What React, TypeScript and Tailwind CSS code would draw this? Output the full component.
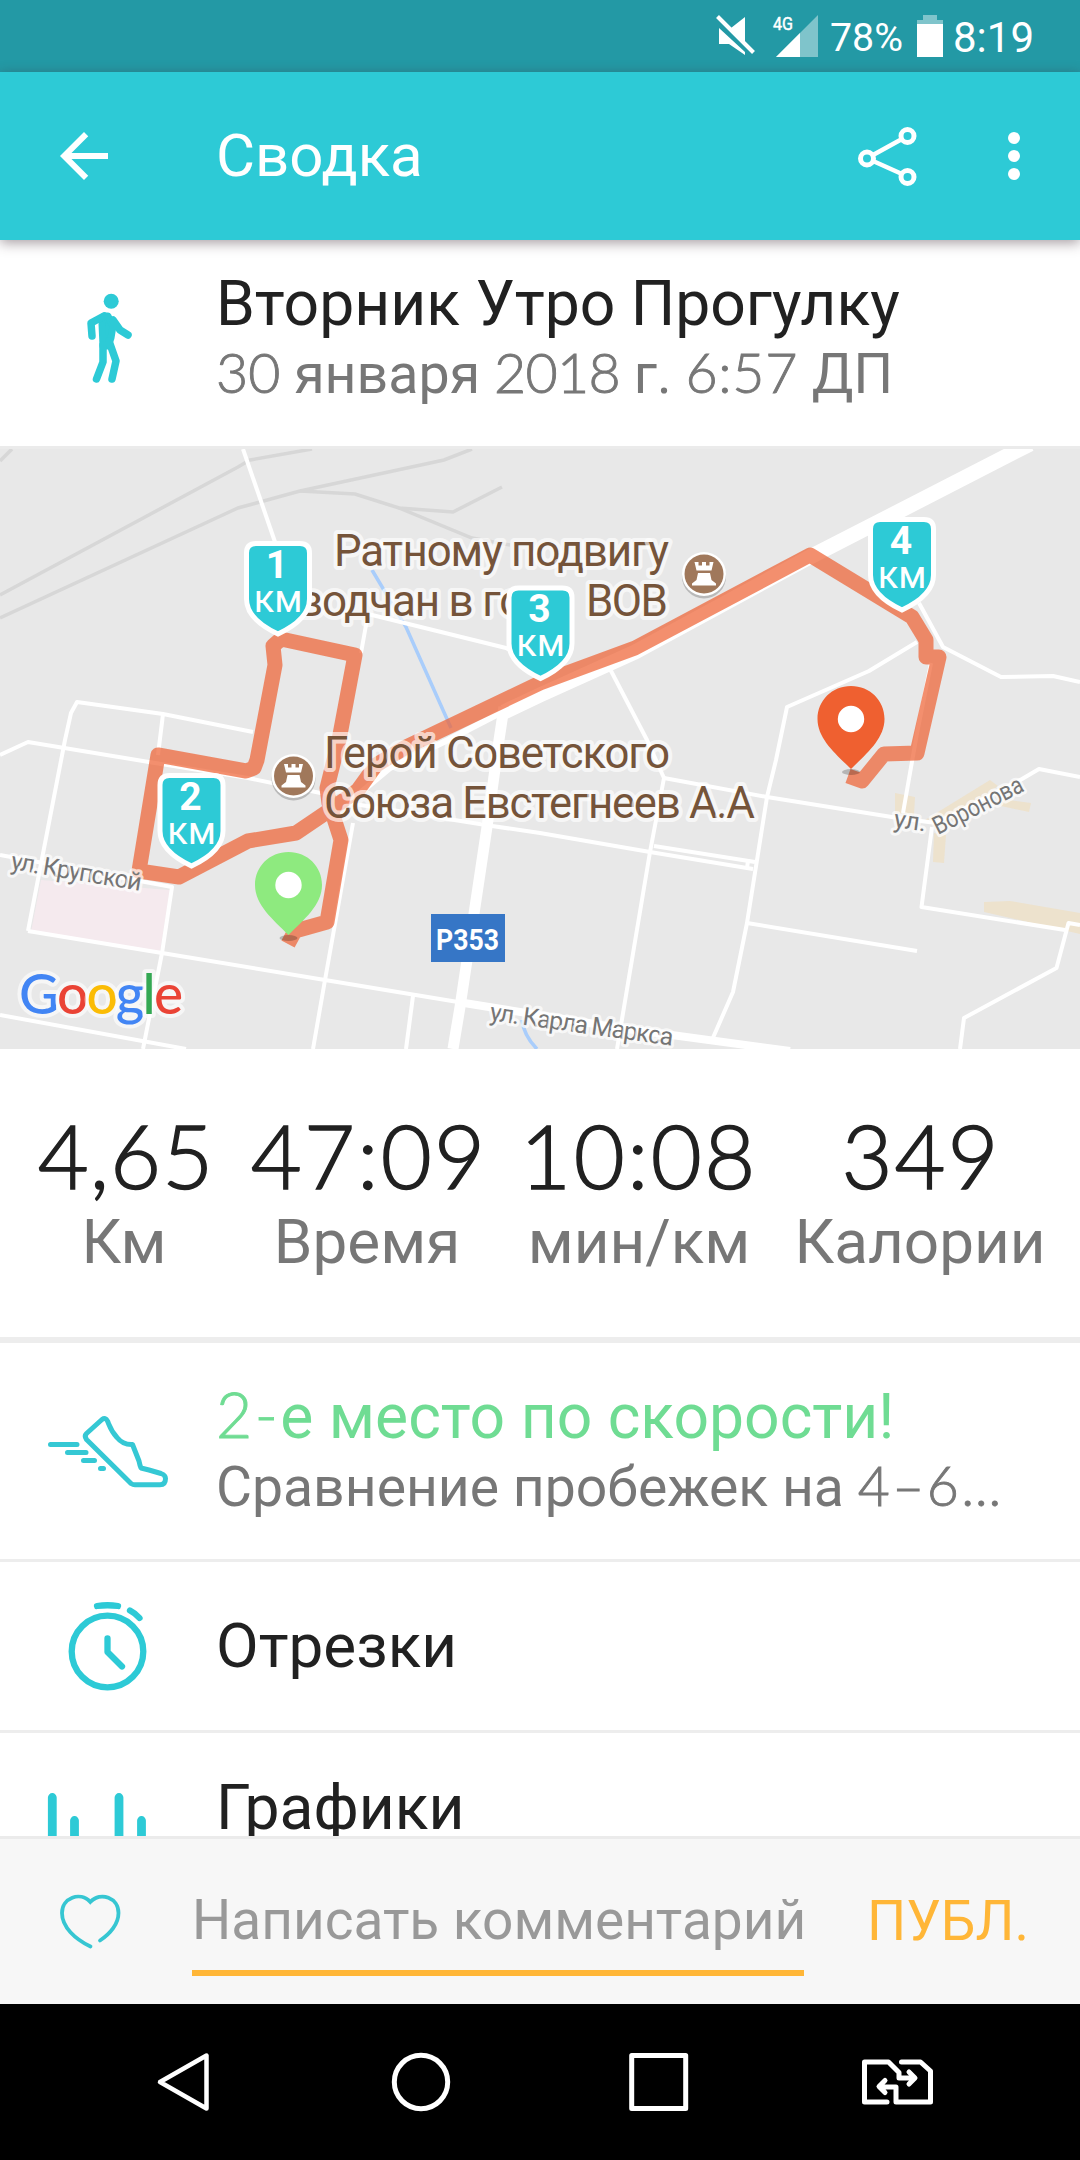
import type { ReactNode } from 'react'
import { clsx } from 'clsx'

const stats = [
  { value: '4,65', label: 'Км', width: 'w-[170px]', tracking: 'tracking-[1px] pl-1' },
  { value: '47:09', label: 'Время', width: 'w-[228px]', tracking: 'tracking-[2.2px] pl-1' },
  { value: '10:08', label: 'мин/км', width: 'w-[228px]', tracking: 'tracking-[2.5px]' },
  { value: '349', label: 'Калории', width: 'w-[246px]', tracking: 'tracking-[2px] pl-0.5' },
]

const kmMarkers = [
  { km: 1, x: 278, y: 541 },
  { km: 2, x: 191.5, y: 773 },
  { km: 3, x: 540.5, y: 585.5 },
  { km: 4, x: 902, y: 517 },
]

const thinRoads = [
  'M243 449 275 542',
  'M361 653 368 614 506 648 520 656',
  'M28 931 65 740 71 713 77 702 163 714 253 732',
  'M163 714 158 755',
  'M0 755 28 742 155 763 248 778 335 796',
  'M0 855 172 887 162 953 143 1049',
  'M28 931 162 953 325 980 458 1002',
  'M0 1015 186 1049',
  'M413 996 406 1049',
  'M353 823 325 980 313 1049',
  'M348 803 492 826 540 833 650 852 753 869',
  'M609 667 647 740 664 778 650 852 617 1049',
  'M664 778 767 797 898 818 936 823',
  'M654 846 755 862',
  'M748 861 747 868',
  'M917 642 869 671 787 707 776 760 767 797 747 923 733 992 712 1040',
  'M747 923 917 951',
  'M919 603 943 647 1001 677 1053 676 1080 682',
  'M931 663 917 733 903 813',
  'M932 827 921.500 907 1065 930',
  'M1080 925 1068.500 923 1056.500 968 964 1018 960 1049',
  'M936 823 1022 779 1039 769 1080 777',
]

function Num({ className, children }: { className?: string; children: ReactNode }) {
  return (
    <span className={clsx('font-[Lato] leading-none font-light [-webkit-text-stroke:0.9px_currentColor]', className)}>
      {children}
    </span>
  )
}

function KmMarker({ km, x, y }: { km: number; x: number; y: number }) {
  return (
    <g transform={`translate(${x} ${y})`}>
      <path
        d="M-22 2.500H22Q31.500 2.500 31.500 12V58C31.500 74 17 85 0 93C-17 85-31.500 74-31.500 58V12Q-31.500 2.500-22 2.500Z"
        fill="#2dcad6"
        stroke="#fff"
        strokeWidth="5"
      />
      <text x="-1" y="36.500" textAnchor="middle" fontSize="39" fontWeight="700" fill="#fff">{km}</text>
      <text x="0" y="70.500" textAnchor="middle" fontSize="38" fill="#fff">км</text>
    </g>
  )
}

function Rook({ x, y }: { x: number; y: number }) {
  return (
    <g transform={`translate(${x} ${y})`}>
      <circle cy="2.500" r="22" fill="#9a9a9a" opacity=".6" />
      <circle r="22" fill="#fff" />
      <circle r="19.500" fill="#a0785b" />
      <path d="M-9.500-12h4v3.500h3.500v-3.500h4v3.500h3.500v-3.500h4l-2 8.500h-15zM-6-1H6L7.500 6 12 9.500V11.500H-12V9.500L-7.500 6Z" fill="#fff" />
    </g>
  )
}

function Pin({ x, y, color }: { x: number; y: number; color: string }) {
  return (
    <g transform={`translate(${x} ${y})`}>
      <ellipse cy="86" rx="9" ry="3" fill="#000" opacity=".22" />
      <path d="M0 0C19 0 33.500 14.500 33.500 33C33.500 53 15 68 0 83C-15 68-33.500 53-33.500 33C-33.500 14.500-19 0 0 0Z" fill={color} />
      <circle cy="33" r="13.200" fill="#fff" />
    </g>
  )
}

function RouteMap() {
  return (
    <svg viewBox="0 449 1080 600" className="block h-[600px] w-[1080px] shrink-0 bg-[#e8e8e8] font-[Roboto]">
      <path d="M41 880 170 890 160 952 31 932Z" fill="#f5eaee" />
      <g fill="#ede2cd">
        <path d="M895 793 915 797 914 815 895 813ZM925 820 990 780 998 786 938 830ZM1001 799 1031 803 1029 812 1001 806ZM934 833 946 835 944 863 933 862ZM984 902 1010 901 1080 913V934L984 912Z" />
      </g>
      <g fill="none" stroke="#d7d7d7" strokeWidth="3.500">
        <path d="M0 461 12 449" />
        <path d="M0 595 238 467 250 460 312 449" />
        <path d="M0 618 238 508 300 491 444 460 472 449" />
        <path d="M300 491 355 494 399 508 453 512 502 487" />
        <path d="M399 508 472 538 510 545" />
      </g>
      <g fill="none" stroke="#a9cdfb" strokeWidth="3.500">
        <path d="M372 570 406 627 451 728" />
        <path d="M522 1020Q524 1036 537 1049" />
      </g>
      <g fill="none" stroke="#fff">
        {thinRoads.map((d) => (
          <path key={d} d={d} strokeWidth="4" strokeLinejoin="round" />
        ))}
        <path d="M458 1002 620 1028 790 1051" strokeWidth="8" />
        <path d="M504 707 499 740 487 827 460 1007 453 1049" strokeWidth="11" />
        <path d="M1030 444 810 557 635 652 540 695 504 712" strokeWidth="15" />
        <path d="M508 709 448 740 390 768 348 803" strokeWidth="6" />
      </g>
      <path
        d="M288 944 295 931 327 922 341 840 329 803 327 788 339 740 355 655 281 639 273 646 275 665 257 760 254 768 246 771 158 755 139 871 179 877 248 841 296 833 327 812 358 790 376 765 406 747 540 683 635 648 810 555 912 617 926 640 926 657 939 657 917 753 884 754 862 781 848 776"
        fill="none"
        stroke="#ee5f30"
        strokeOpacity=".7"
        strokeWidth="15"
        strokeLinejoin="round"
      />
      <Rook x={704} y={574} />
      <Rook x={293.5} y={776} />
      <g fontSize="44" fill="#75543a" stroke="#fff" strokeOpacity=".65" strokeWidth="8" strokeLinejoin="round" paintOrder="stroke">
        <text x="334" y="566" textLength="335">Ратному подвигу</text>
        <text x="298" y="616" letterSpacing="-1.200">водчан в го</text>
        <text x="586" y="616" textLength="82">ВОВ</text>
        <text x="324" y="768" textLength="346">Герой Советского</text>
        <text x="324" y="818" textLength="431">Союза Евстегнеев А.А</text>
      </g>
      <g fontSize="25" fill="#757575" stroke="#fff" strokeOpacity=".7" strokeWidth="6" strokeLinejoin="round" paintOrder="stroke">
        <text transform="translate(10 869) rotate(9.500)" textLength="132">ул. Крупской</text>
        <text transform="translate(893 827) rotate(8)">ул.</text>
        <text transform="translate(938 835) rotate(-27)" fontSize="25" textLength="98" lengthAdjust="spacingAndGlyphs">Воронова</text>
        <text transform="translate(489 1020) rotate(8)" textLength="185">ул. Карла Маркса</text>
      </g>
      <rect x="431" y="914" width="74" height="48" fill="#3676c6" />
      <text x="467.500" y="950" textAnchor="middle" fontSize="30" fontWeight="700" fill="#fff" textLength="63" lengthAdjust="spacingAndGlyphs">P353</text>
      <text x="19" y="1014" fontSize="55" fontWeight="500" fontFamily="Lato" textLength="164" stroke="#fff" strokeOpacity=".6" strokeWidth="8" strokeLinejoin="round" paintOrder="stroke">
        <tspan fill="#4285f4">G</tspan>
        <tspan fill="#ea4335">o</tspan>
        <tspan fill="#fbbc05">o</tspan>
        <tspan fill="#4285f4">g</tspan>
        <tspan fill="#34a853">l</tspan>
        <tspan fill="#ea4335">e</tspan>
      </text>
      <Pin x={851} y={686} color="#ef6030" />
      <Pin x={288.5} y={852} color="#8eea7f" />
      {kmMarkers.map((m) => (
        <KmMarker key={m.km} {...m} />
      ))}
    </svg>
  )
}

function StatusBar() {
  return (
    <div className="flex h-[72px] shrink-0 items-center justify-end bg-[#2399a5] pr-[45px] text-white">
      <svg viewBox="715 0 230 72" className="h-[72px] w-[230px]" fill="#fff">
        <path d="M719 28 732 40 745 52V55L729 44H719ZM745 17V42L731 28Z" />
        <path d="M717.500 16.500 753.500 52.500" stroke="#fff" strokeWidth="4" />
        <text x="773" y="30" fontSize="18.500" textLength="20" lengthAdjust="spacingAndGlyphs" stroke="#fff" strokeWidth=".5">4G</text>
        <path d="M818 15V57H776Z" opacity=".42" />
        <path d="M800 33V57H776Z" />
        <text x="830" y="51" fontSize="39" textLength="73" lengthAdjust="spacingAndGlyphs">78%</text>
        <path d="M923 15H937V20H943V25H917V20H923Z" opacity=".42" />
        <path d="M917 24H943V57H917Z" />
      </svg>
      <span className="ml-2 w-[82px] pt-[3px] text-[42px] leading-[69px] whitespace-nowrap">8:19</span>
    </div>
  )
}

function AppBar() {
  return (
    <div className="z-10 flex h-[168px] shrink-0 items-center bg-[#2dcad6] text-white shadow-[0_3px_12px_rgba(60,40,50,0.45)]">
      <svg viewBox="0 0 24 24" className="ml-12 size-[72px]" fill="currentColor">
        <path d="M20 11H7.830l5.590-5.590L12 4l-8 8 8 8 1.410-1.410L7.830 13H20v-2z" />
      </svg>
      <h1 className="ml-24 flex-1 text-[60px]">Сводка</h1>
      <svg viewBox="850 120 75 72" className="h-[72px] w-[75px]" fill="none" stroke="#fff">
        <g strokeWidth="5">
          <circle cx="907.500" cy="136" r="6.500" />
          <circle cx="867" cy="158.500" r="6.500" />
          <circle cx="907.500" cy="177" r="6.500" />
          <path d="M873 155 902 139M873 161 902 174" strokeWidth="4.500" />
        </g>
      </svg>
      <svg viewBox="990 120 48 72" className="mr-[42px] ml-[65px] h-[72px] w-12" fill="#fff">
        <circle cx="1014" cy="138" r="6" />
        <circle cx="1014" cy="156" r="6" />
        <circle cx="1014" cy="174" r="6" />
      </svg>
    </div>
  )
}

function Row({ icon, className, children }: { icon: ReactNode; className?: string; children: ReactNode }) {
  return (
    <div className={clsx('flex shrink-0', className)}>
      <div className="w-[216px] shrink-0">{icon}</div>
      <div className="min-w-0 whitespace-nowrap">{children}</div>
    </div>
  )
}

const WalkIcon = (
  <svg viewBox="0 240 216 206" className="h-[206px] w-[216px]" fill="#2dcad6" stroke="#2dcad6" strokeLinecap="round" strokeLinejoin="round">
    <circle cx="111.200" cy="301.300" r="7.500" stroke="none" />
    <path d="M108 316 113 326 111 338 108 346 103 346 102 324 104 316Z" strokeWidth="7" />
    <path d="M92 336 91 323 104 316M113 320 120 330 128 335M103 345 103 362 96.500 379M109 341 116 361 112 379" fill="none" strokeWidth="7.500" />
  </svg>
)

const ShoeIcon = (
  <svg viewBox="0 1343 216 216" className="h-[216px] w-[216px]" fill="none" stroke="#35c8d4" strokeWidth="5" strokeLinecap="round" strokeLinejoin="round">
    <path d="M50.500 1444.500H77M67.500 1452.500H86M83.500 1460.500H94.500M100.500 1468.500H103.500" />
    <path d="M102 1419.500 86.500 1433.500Q84 1436 86.500 1439.500L131 1483.500Q133 1484.800 135 1484.800H160Q165.500 1484.800 165.500 1478.500Q165.500 1475 161 1473.500L149 1470 141 1468Q140 1466 139 1461L132.500 1444.500Q123 1445 117 1437.500C111 1431 110 1427 107.500 1421Q105.500 1417 102 1419.500Z" />
  </svg>
)

const StopwatchIcon = (
  <svg viewBox="0 1562 216 168" className="h-[168px] w-[216px]" fill="none" stroke="#2dcad6" strokeWidth="6.300" strokeLinecap="round" strokeLinejoin="round">
    <circle cx="107.500" cy="1651.500" r="35.800" />
    <path d="M107.500 1638.500V1652L122 1666.500M97 1606Q107.500 1604.500 118 1606M130 1610.500Q135 1613 139.500 1618" />
  </svg>
)

const ChartIcon = (
  <svg viewBox="0 1733 216 149" className="h-[149px] w-[216px]" fill="none" stroke="#2dcad6" strokeWidth="8.800" strokeLinecap="round">
    <path d="M52.300 1797.500V1870M74.500 1820.500V1870M119 1797.500V1870M141.500 1820.500V1870" />
  </svg>
)

function CommentBar() {
  return (
    <div className="flex h-[168px] shrink-0 border-t-[3px] border-[#ebebeb] bg-[#f7f7f7]">
      <svg viewBox="0 1839 192 165" className="h-[165px] w-[192px]" fill="none" stroke="#36c6d2" strokeWidth="3.800" strokeLinecap="round">
        <path d="M90.500 1946.500C75 1939 62 1927 62 1913C62 1898 80 1891 90.300 1902C101 1891 118.500 1898 118.500 1913C118.500 1924 110 1934 100 1940.500" />
      </svg>
      <div className="mb-7 flex w-[612px] items-start border-b-6 border-[#ffb637] pt-12 whitespace-nowrap">
        <span className="text-[55px] leading-[66px] text-[#999]">Написать комментарий</span>
      </div>
      <button className="ml-[63px] flex items-start pt-[49px] text-[55px] leading-[66px] whitespace-nowrap text-[#ffb637]">ПУБЛ.</button>
    </div>
  )
}

function NavBar() {
  return (
    <div className="h-[156px] shrink-0 bg-black">
      <svg viewBox="0 2004 1080 156" className="block h-[156px] w-[1080px]" fill="none" stroke="#fff" strokeWidth="5" strokeLinejoin="round" strokeLinecap="round">
        <path d="M160 2082 206.500 2055.500V2108.500Z" strokeWidth="4.500" />
        <circle cx="421" cy="2082" r="26.700" />
        <rect x="631.700" y="2055.500" width="54" height="53" />
        <path d="M887 2102H864.500V2062H888.500L899 2072.500V2078H914M909 2072 915 2078 909 2084" />
        <path d="M901.500 2062H920.500L930.500 2071V2102H896V2087H880M885 2080.500 879 2086.500 885 2092.500" />
      </svg>
    </div>
  )
}

export default function App() {
  return (
    <div className="flex h-[2160px] w-[1080px] flex-col overflow-hidden bg-white font-[Roboto] text-[#212121]">
      <StatusBar />
      <AppBar />

      <div className="flex h-[1596px] shrink-0 flex-col overflow-hidden">
        <Row icon={WalkIcon} className="h-[209px] border-b-[3px] border-[#ebebeb]">
          <h2 className="pt-7 text-[62.4px] leading-[72px]">Вторник Утро Прогулку</h2>
          <p className="mt-0.5 text-[55.5px] leading-[66px] text-[#777]">
            <Num>30</Num> января <Num className="tracking-[-0.7px]">2018</Num> г. <Num className="tracking-[0.7px]">6:57</Num> ДП
          </p>
        </Row>

        <RouteMap />

        <div className="flex h-[294px] shrink-0 justify-between border-b-6 border-[#ededed] pt-14 pr-[37px] pl-[39px]">
          {stats.map((s) => (
            <div key={s.label} className={clsx('flex flex-col items-center whitespace-nowrap', s.width)}>
              <span className={clsx('font-[Lato] text-[88px] leading-[100px] font-light [-webkit-text-stroke:1.5px_currentColor]', s.tracking)}>
                {s.value}
              </span>
              <span className="mt-px text-[62px] leading-[72px] text-[#777]">{s.label}</span>
            </div>
          ))}
        </div>

        <Row icon={ShoeIcon} className="h-[219px] border-b-[3px] border-[#ededed]">
          <h3 className="pt-[38px] text-[62.4px] leading-[72px] text-[#6fdc93]">
            <Num className="tracking-[2.5px]">2-</Num>е место по скорости!
          </h3>
          <p className="mt-0.5 text-[55.3px] leading-[66px] text-[#777]">
            Сравнение пробежек на <Num className="tracking-[2.5px]">4–6…</Num>
          </p>
        </Row>
        <Row icon={StopwatchIcon} className="h-[171px] items-center border-b-[3px] border-[#ededed]">
          <h3 className="pb-0.5 text-[62px]">Отрезки</h3>
        </Row>
        <Row icon={ChartIcon} className="h-[149px] items-center">
          <h3 className="text-[62.4px]">Графики</h3>
        </Row>
      </div>

      <CommentBar />
      <NavBar />
    </div>
  )
}
